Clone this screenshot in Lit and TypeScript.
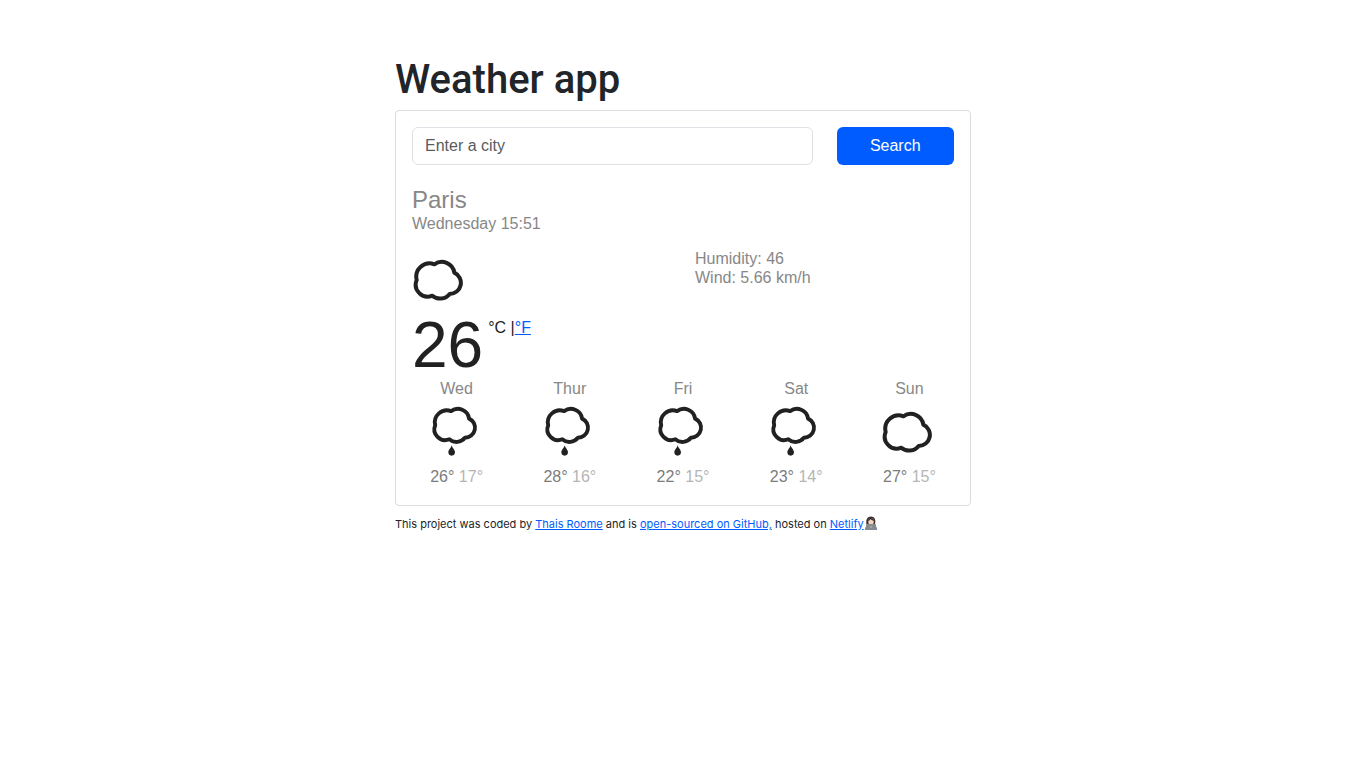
import { LitElement, html, css, svg } from "lit";
import { customElement, property, state } from "lit/decorators.js";

@customElement("weather-icon")
class WeatherIcon extends LitElement {
  @property() kind = "cloud";

  static styles = css`
    :host {
      display: block;
      width: 56px;
      height: 56px;
      color: #212121;
    }
    svg {
      display: block;
      width: 100%;
      height: 100%;
    }
  `;

  render() {
    const rain = this.kind === "rain";
    return html`<svg viewBox="0 0 168 168" aria-hidden="true">
      <path
        transform=${rain ? "translate(6 -12) scale(.9)" : ""}
        d="M67 37 A40 40 0 0 0 14 84 A36 36 0 0 0 61 131 A36 36 0 0 0 113 126 A33.5 33.5 0 0 0 127 62 A38 38 0 0 0 67 37 Z"
        fill="none"
        stroke="currentColor"
        stroke-width=${rain ? 13 : 12}
        stroke-linejoin="round"
      />
      ${rain
        ? svg`<path d="M68 124 C66 133 58 137 58 145 C58 151 62 155 68 155 C74 155 78 151 78 145 C78 137 70 133 68 124 Z" fill="currentColor" />`
        : ""}
    </svg>`;
  }
}

@customElement("app-root")
class AppRoot extends LitElement {
  @state() private forecast = [
    { day: "Wed", icon: "rain", max: 26, min: 17 },
    { day: "Thur", icon: "rain", max: 28, min: 16 },
    { day: "Fri", icon: "rain", max: 22, min: 15 },
    { day: "Sat", icon: "rain", max: 23, min: 14 },
    { day: "Sun", icon: "cloud", max: 27, min: 15 },
  ];

  static styles = css`
    :host {
      display: block;
      background: #fff;
      color: #212529;
      font-family: "Liberation Sans", Arial, sans-serif;
      font-size: 16px;
      line-height: 19px;
    }
    * {
      box-sizing: border-box;
    }
    .container {
      max-width: 576px;
      margin: 0 auto;
      padding-top: 56px;
    }
    h1 {
      margin: 0 0 6px;
      font: 500 40px/48px Roboto, sans-serif;
    }
    .card {
      padding: 16px;
      border: 1px solid #dadce0;
      border-radius: 4px;
    }
    .row {
      display: flex;
      margin: 0 -12px;
    }
    .col {
      flex: 1 1 0;
      min-width: 0;
      padding: 0 12px;
    }
    .wide {
      flex-grow: 0;
      flex-basis: 75%;
    }
    .field,
    .search {
      display: block;
      width: 100%;
      height: 38px;
      margin: 0;
      border-radius: 6px;
      font: inherit;
    }
    .field {
      padding: 6px 12px;
      border: 1px solid #dee2e6;
      background: #fff;
      color: #212529;
    }
    .field::placeholder {
      color: #595c5f;
      opacity: 1;
    }
    .search {
      padding: 0 0 2px;
      border: 0;
      background: #005cff;
      color: #fff;
    }
    .muted {
      color: #878787;
    }
    .place {
      margin: 20px 0 16px;
    }
    h2 {
      margin: 0;
      font-size: 24px;
      font-weight: 400;
      line-height: 29px;
    }
    p {
      margin: 0;
    }
    .now-icon {
      margin-top: 3px;
    }
    .reading {
      display: flex;
      gap: 5px;
      color: #212121;
    }
    .degrees {
      height: 71px;
      font-size: 64px;
      line-height: 74px;
    }
    .units {
      padding-top: 10px;
    }
    a {
      color: #005cff;
    }
    .max {
      color: #7c7c7c;
    }
    .day {
      display: flex;
      flex-direction: column;
      align-items: center;
    }
    .day-icon {
      margin: 6px 0 7px;
    }
    .temps {
      margin-bottom: 3px;
      white-space: nowrap;
    }
    .min {
      color: #b5b5b5;
    }
    footer {
      margin-top: 9px;
      font: 400 11px/18px Inter, sans-serif;
    }
    .coder {
      display: inline-block;
      width: 14px;
      height: 14px;
      vertical-align: -2px;
    }
  `;

  render() {
    return html`
      <main class="container">
        <h1>Weather app</h1>
        <section class="card">
          <form class="row" @submit=${(e: Event) => e.preventDefault()}>
            <div class="col wide">
              <input class="field" type="search" aria-label="City" placeholder="Enter a city" />
            </div>
            <div class="col"><button class="search" type="submit">Search</button></div>
          </form>
          <div class="place muted">
            <h2>Paris</h2>
            <p>Wednesday 15:51</p>
          </div>
          <div class="row">
            <div class="col">
              <weather-icon class="now-icon"></weather-icon>
              <div class="reading">
                <span class="degrees">26</span>
                <span class="units">°C |<a href="#">°F</a></span>
              </div>
            </div>
            <div class="col muted">
              <p>Humidity: 46</p>
              <p>Wind: 5.66 km/h</p>
            </div>
          </div>
          <div class="row">
            ${this.forecast.map(
              (d) => html`<div class="col day muted">
                <div>${d.day}</div>
                <weather-icon class="day-icon" kind=${d.icon}></weather-icon>
                <div class="temps"><span class="max">${d.max}°</span> <span class="min">${d.min}°</span></div>
              </div>`
            )}
          </div>
        </section>
        <footer>
          This project was coded by <a href="#">Thais Roome</a> and is
          <a href="#">open-sourced on GitHub,</a> hosted on
          <a href="#">Netlify</a><svg class="coder" viewBox="0 0 28 28" role="img" aria-label="Technologist">
            <path d="M5 16 C3 7 7 1 14 1 C21 1 24 7 22 16 Z" fill="#3a3032" />
            <path d="M2 28 C2 20 6 17 14 17 C22 17 26 20 26 28 Z" fill="#7180b8" />
            <ellipse cx="14" cy="11" rx="5.5" ry="7" fill="#f3d3bd" />
            <path d="M8 10 C9 4 12 3 15 4 C18 5 20 7 20 10 C16 9 14 7 13 6 C12 8 10 10 8 10 Z" fill="#3a3032" />
            <rect x="4" y="16" width="20" height="12" rx="1.5" fill="#858a8d" />
            <circle cx="14" cy="22" r="1.5" fill="#c8cbcd" />
          </svg>
        </footer>
      </main>
    `;
  }
}
